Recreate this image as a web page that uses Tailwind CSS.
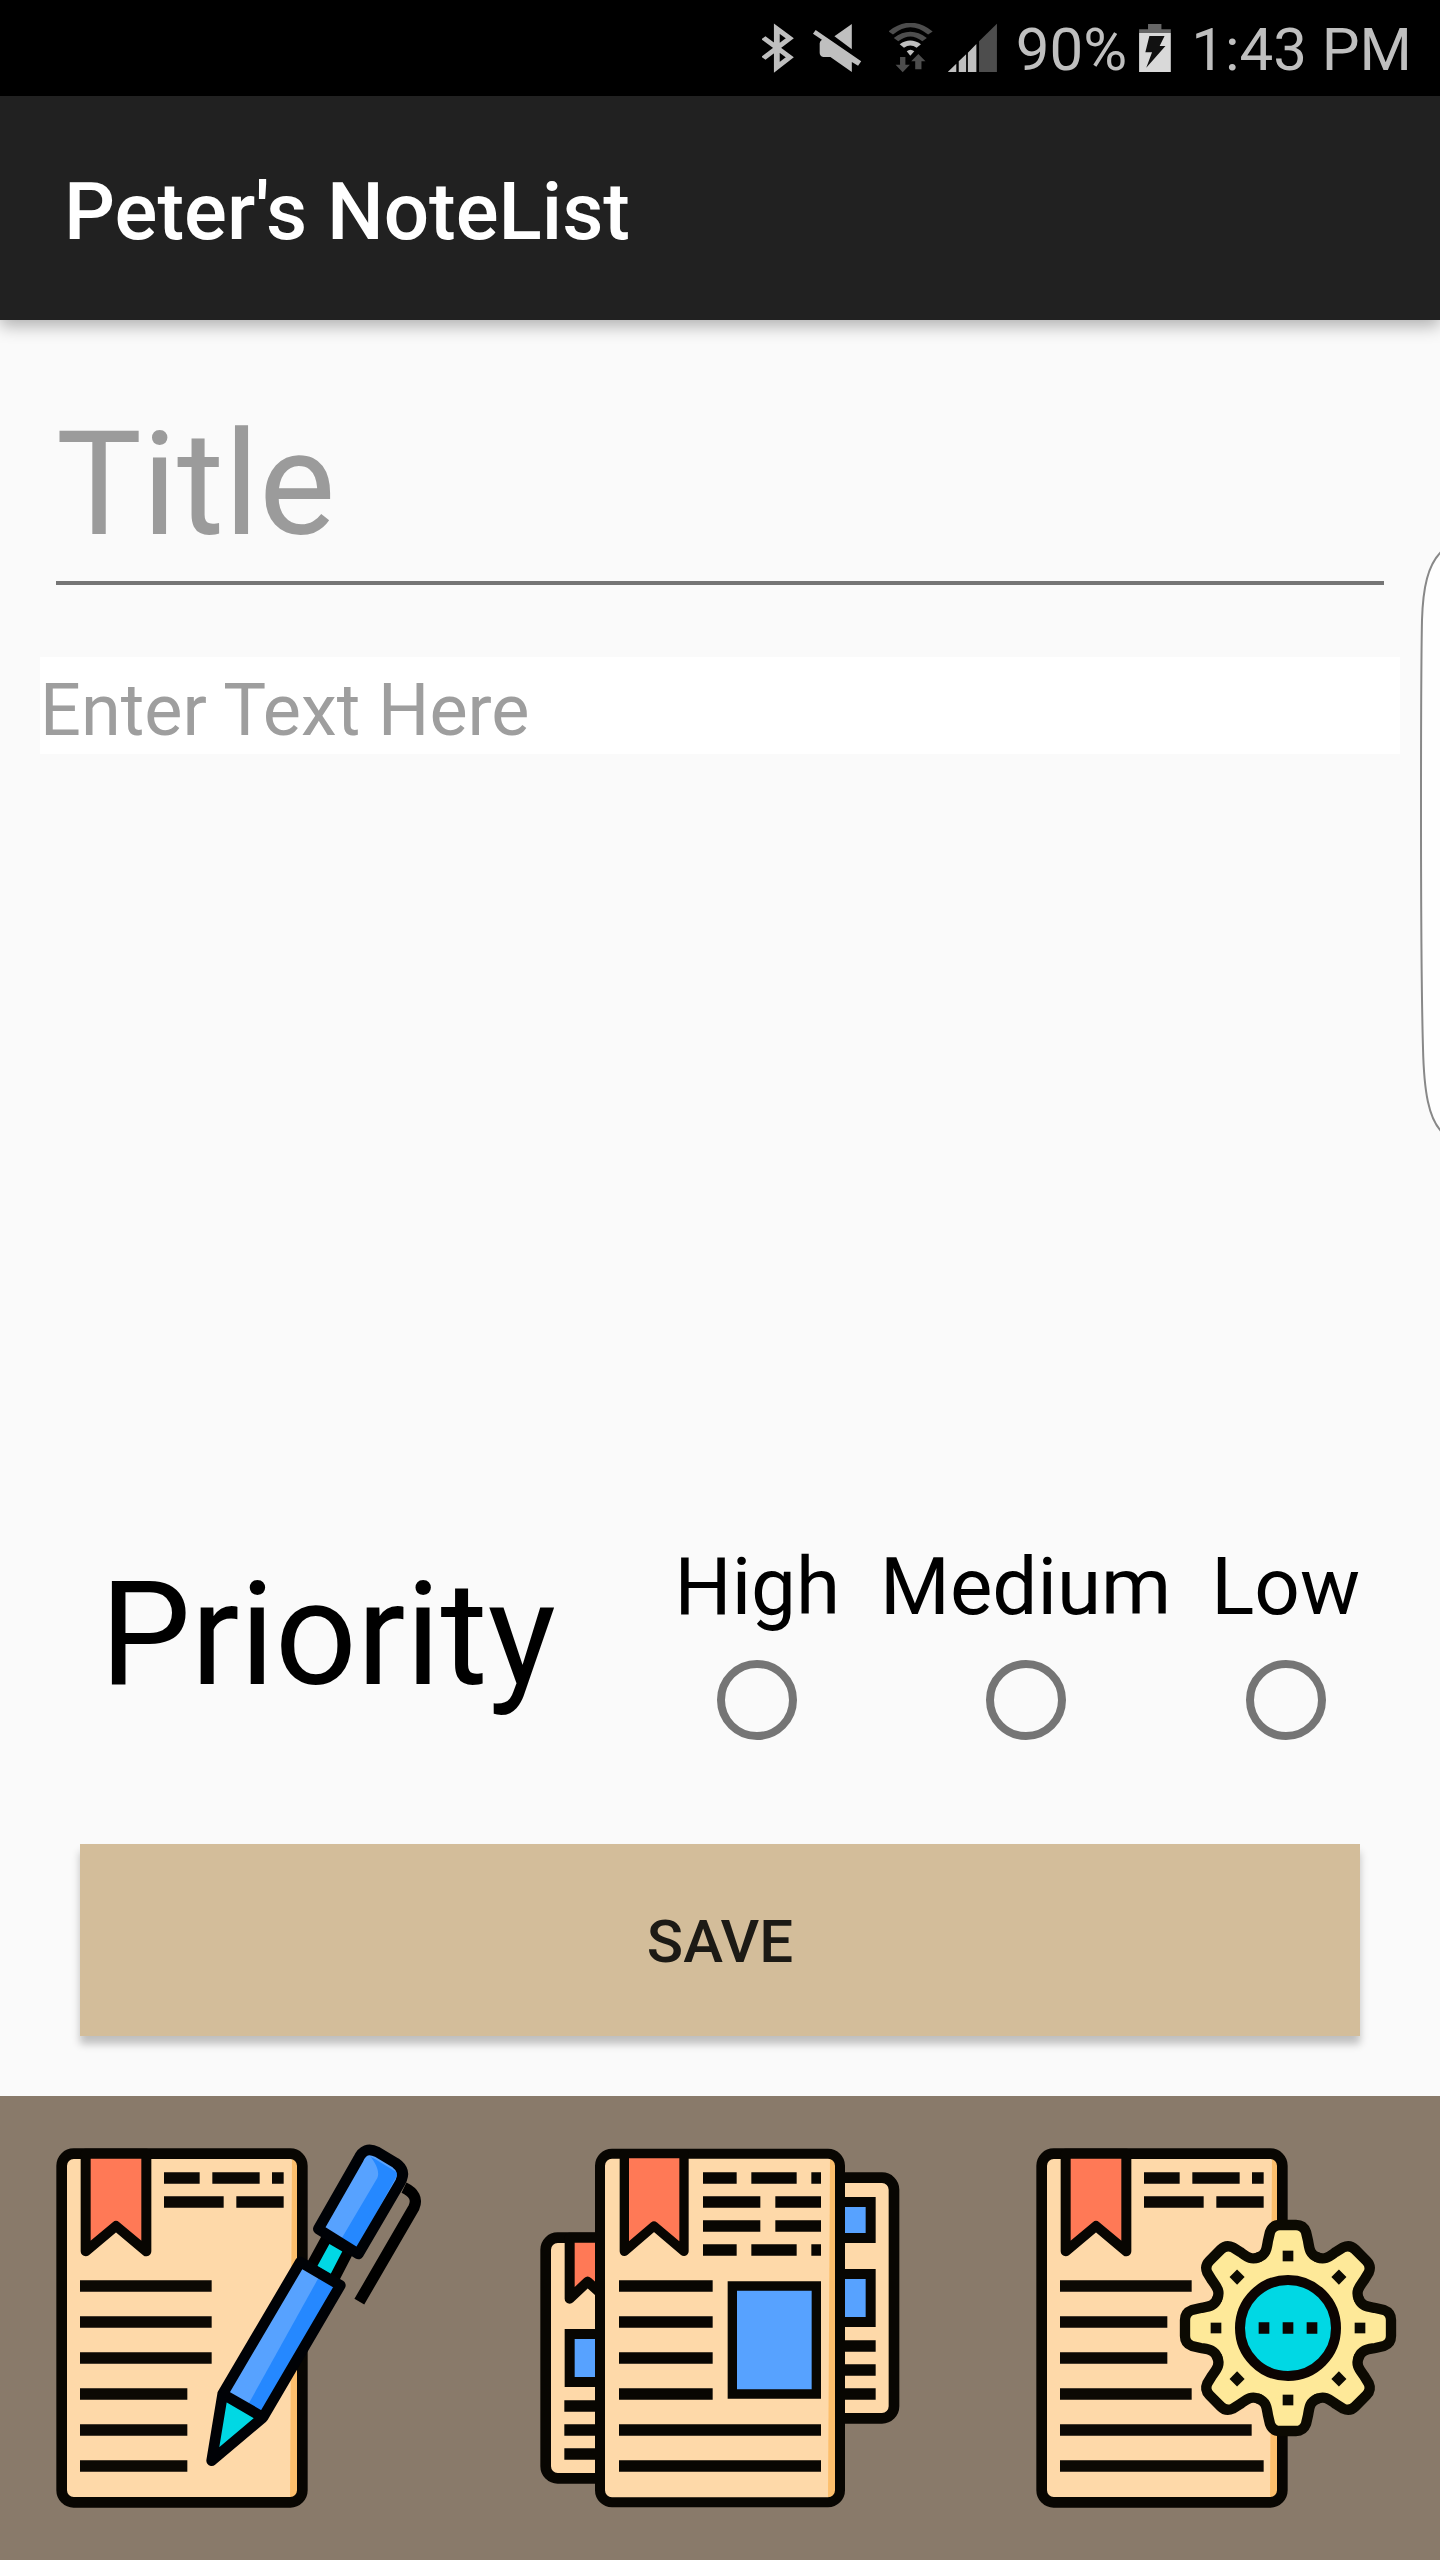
<!DOCTYPE html>
<html lang="en">
<head>
<meta charset="utf-8">
<meta name="viewport" content="width=device-width, initial-scale=1">
<title>Peter's NoteList</title>
<script src="https://cdn.jsdelivr.net/npm/@tailwindcss/browser@4"></script>
</head>
<body class="relative flex min-h-screen flex-col overflow-x-hidden bg-[#fafafa] font-[Roboto,sans-serif] text-black">

<!-- Status bar -->
<div class="flex h-24 items-center justify-end bg-black pr-7 text-[60px] leading-[84px] text-[#bfbfbf]">
  <svg class="mr-[18px] h-[50px] w-8" viewBox="44.8 69 71.68 150" preserveAspectRatio="none" fill="none" stroke="#bfbfbf" stroke-width="13" aria-label="Bluetooth">
    <path d="M48 113L107 172L78 202V86L107 115L48 175"/>
  </svg>
  <svg class="mr-[27px] h-[50px] w-[50px]" viewBox="156.8 69 112 150" preserveAspectRatio="none" fill="#bfbfbf" aria-label="Muted">
    <path d="M246 72V148L207 109Z"/>
    <path d="M165 90L267 184L260 197L246 186V216L198 171H182Q174 168 174 158V130Q174 124 179 119L159 101Z"/>
  </svg>
  <svg class="mr-[15px] h-[50px] w-11" viewBox="329.28 69 98.56 150" preserveAspectRatio="none" fill="none" aria-label="Wi-Fi">
    <path d="M333 99Q377 51 422 99" stroke="#4d4d4d" stroke-width="14"/>
    <path d="M345 119Q377 86 409 119" stroke="#4d4d4d" stroke-width="14"/>
    <path d="M358 138Q377 120 396 138" stroke="#bfbfbf" stroke-width="14"/>
    <path d="M369 154Q377 145 386 154L377 167Z" fill="#bfbfbf"/>
    <path d="M354 171H366V194H376L360 217L344 194H354ZM388 208V184H379L395 162L411 184H402V208Z" fill="#4d4d4d"/>
  </svg>
  <svg class="mr-[18px] h-[50px] w-[50px]" viewBox="461.44 69 112 150" preserveAspectRatio="none" fill="#bfbfbf" aria-label="Signal">
    <path d="M461 216L480 191V216ZM485.500 184L502 163V216H485.500ZM506 158L525 132V216H506Z"/>
    <path d="M531 124L571 71V216H531Z" fill="#4d4d4d"/>
  </svg>
  <span class="pt-1">90%</span>
  <svg class="mr-5 ml-3 h-[50px] w-8" viewBox="893.76 69 71.68 150" preserveAspectRatio="none" aria-label="Charging">
    <path d="M894 99V88H914V72H944V88H965V99Z" fill="#666"/>
    <path d="M894 99H965V216H894Z" fill="#d9d9d9"/>
    <path d="M917 108H951L940 138H953L910 203L923 157H908Z" fill="#111"/>
  </svg>
  <span class="pt-1">1:43 PM</span>
</div>

<!-- App bar -->
<header class="flex h-56 items-center bg-[#212121] px-16 pt-2 shadow-[0_6px_16px_rgba(0,0,0,0.3)]">
  <h1 class="text-[80px] leading-[94px] font-medium text-white">Peter's NoteList</h1>
</header>

<main class="flex flex-1 flex-col pt-[67px] pb-[60px]">
  <input type="text" aria-label="Title" placeholder="Title" class="mx-14 h-[198px] border-b-4 border-[#757575] bg-transparent pt-[2px] text-[144px] outline-none placeholder:text-[#9b9b9b]">
  <textarea rows="1" aria-label="Note text" placeholder="Enter Text Here" class="mx-10 mt-[72px] h-[97px] resize-none overflow-hidden bg-white pt-3 text-[72px] leading-[84px] outline-none placeholder:text-[#9e9e9e]"></textarea>

  <div class="mt-auto flex items-start justify-between pt-20 pr-[60px] pl-[100px]">
    <h2 id="priority" class="text-[144px] leading-[190px]">Priority</h2>
    <div role="radiogroup" aria-labelledby="priority" class="flex text-[80px] leading-[94px]">
      <label class="flex flex-col items-center gap-[26px] px-5">High
        <input type="radio" name="priority" value="high" class="size-20 appearance-none rounded-full border-8 border-[#757575] checked:bg-[#757575]">
      </label>
      <label class="flex flex-col items-center gap-[26px] px-5">Medium
        <input type="radio" name="priority" value="medium" class="size-20 appearance-none rounded-full border-8 border-[#757575] checked:bg-[#757575]">
      </label>
      <label class="flex flex-col items-center gap-[26px] px-5">Low
        <input type="radio" name="priority" value="low" class="size-20 appearance-none rounded-full border-8 border-[#757575] checked:bg-[#757575]">
      </label>
    </div>
  </div>

  <button type="button" class="mx-20 mt-[104px] h-48 bg-[#d3bd9a] pt-1 text-[60px] font-medium text-[#1c1a15] shadow-[0_8px_8px_rgba(0,0,0,0.24)]">SAVE</button>
</main>

<!-- Bottom navigation -->
<nav class="grid grid-cols-3 justify-items-center bg-[#897a6a] pt-[14px] pb-5">
  <a href="#new" aria-label="Write note">
    <svg class="h-[430px] w-[420px]" viewBox="0 0 1260 1290" fill="none">
      <defs>
        <g id="page">
          <rect x="95" y="131" width="722" height="1046" rx="36" fill="#fed9a9"/>
          <path d="M786 140H802V1168H780Z" fill="#fdbf6c"/>
          <rect x="95" y="131" width="722" height="1046" rx="36" stroke="#080602" stroke-width="32"/>
          <path d="M167 131V424L258 348L349 424V131Z" fill="#ff7956" stroke="#080602" stroke-width="30" stroke-linejoin="round"/>
          <path d="M402 204H509M547 204H689M726 204H761M402 276H581M619 276H761" stroke="#0c0904" stroke-width="34"/>
        </g>
      </defs>
      <use href="#page"/>
      <path d="M150 528H545M150 636H545M150 744H545M150 852H472M150 960H472M150 1068H472" stroke="#0c0904" stroke-width="34"/>
      <path d="M1122 233Q1168 255 1152 292L988 575" stroke="#000" stroke-width="34"/>
      <path d="M892 380L958 418L908 515L840 475Z" fill="#00d8e4" stroke="#000" stroke-width="32"/>
      <path d="M865 357L985 147Q1003 106 1042 126L1097 159Q1130 182 1111 217L985 432Z" fill="#57a2ff"/>
      <path d="M1040 150L1105 190L980 415L932 390L1042 204Q1052 180 1022 140Z" fill="#2588ff"/>
      <path d="M865 357L985 147Q1003 106 1042 126L1097 159Q1130 182 1111 217L985 432Z" stroke="#000206" stroke-width="32" stroke-linejoin="round"/>
      <path d="M811 456L931 526L699 922L578 852Z" fill="#57a2ff"/>
      <path d="M872 492L931 526L699 922L650 892Z" fill="#2588ff"/>
      <path d="M578 852L699 922L545 1052Z" fill="#00d8e4"/>
      <path d="M811 456L931 526L699 922L578 852ZM578 852L545 1052L699 922" stroke="#000206" stroke-width="32" stroke-linejoin="round"/>
    </svg>
  </a>
  <a href="#notes" aria-label="All notes">
    <svg class="h-[430px] w-[420px]" viewBox="0 0 1260 1290" fill="none" stroke="#080602">
      <rect x="700" y="203" width="452" height="722" rx="36" fill="#fed9a9" stroke-width="32"/>
      <path d="M900 276H1082V384H900ZM900 492H1082V636H900Z" fill="#57a2ff" stroke-width="30"/>
      <path d="M900 708H1097M900 780H1097M900 852H1097" stroke-width="34"/>
      <rect x="107" y="383" width="452" height="722" rx="36" fill="#fed9a9" stroke-width="32"/>
      <path d="M179 383V566L233 515L290 566V383Z" fill="#ff7956" stroke-width="30" stroke-linejoin="round"/>
      <path d="M179 672H340V816H179Z" fill="#57a2ff" stroke-width="30"/>
      <path d="M163 888H340M163 960H340M163 1032H340" stroke-width="34"/>
      <rect x="270" y="131" width="720" height="1046" rx="36" fill="#fed9a9" stroke="none"/>
      <path d="M960 140H976V1168H954Z" fill="#fdbf6c" stroke="none"/>
      <rect x="270" y="131" width="720" height="1046" rx="36" stroke-width="30"/>
      <path d="M343 131V424L432 348L522 424V131Z" fill="#ff7956" stroke-width="28" stroke-linejoin="round"/>
      <path d="M579 204H680M724 204H860M904 204H933M579 276H751M796 276H933M579 348H751M796 348H933M579 420H680M724 420H860M904 420H933" stroke-width="34"/>
      <path d="M327 528H608M327 636H608M327 744H608M327 852H608M327 960H933M327 1068H933" stroke-width="34"/>
      <path d="M667 528H919V852H667Z" fill="#57a2ff" stroke-width="28"/>
    </svg>
  </a>
  <a href="#settings" aria-label="Settings">
    <svg class="h-[430px] w-[420px]" viewBox="-60 0 1260 1290" fill="none">
      <defs>
        <g id="tooth">
          <path d="M-88 -212C-64 -222 -64 -240 -60 -262L-54 -288Q-46 -309 -24 -309H24Q46 -309 54 -288L60 -262C64 -240 64 -222 88 -212" fill="#fee999" stroke="#0c0a02" stroke-width="31" stroke-linejoin="round" stroke-linecap="round"/>
        </g>
        <path id="hole" d="M-16 -232H16V-200H-16Z" fill="#0c0a02"/>
      </defs>
      <use href="#page"/>
      <path d="M150 528H545M150 636H472M150 744H472M150 852H545M150 960H725M150 1068H761" stroke="#0c0904" stroke-width="34"/>
      <g transform="translate(834 654)">
        <circle r="226" fill="#fee999"/>
        <use href="#tooth"/>
        <use href="#tooth" transform="rotate(45)"/>
        <use href="#tooth" transform="rotate(90)"/>
        <use href="#tooth" transform="rotate(135)"/>
        <use href="#tooth" transform="rotate(180)"/>
        <use href="#tooth" transform="rotate(225)"/>
        <use href="#tooth" transform="rotate(270)"/>
        <use href="#tooth" transform="rotate(315)"/>
        <circle r="213" fill="#fee999"/>
        <use href="#hole"/>
        <use href="#hole" transform="rotate(45)"/>
        <use href="#hole" transform="rotate(90)"/>
        <use href="#hole" transform="rotate(135)"/>
        <use href="#hole" transform="rotate(180)"/>
        <use href="#hole" transform="rotate(225)"/>
        <use href="#hole" transform="rotate(270)"/>
        <use href="#hole" transform="rotate(315)"/>
        <circle r="144" fill="#00d8e4" stroke="#0c0402" stroke-width="30"/>
        <path d="M-88 0H-56M-16 0H16M56 0H88" stroke="#0c0402" stroke-width="34"/>
      </g>
    </svg>
  </a>
</nav>

<!-- Edge panel handle overlapping the right side -->
<svg class="absolute top-[548px] right-0 h-[588px] w-5" viewBox="0 0 20 588" fill="#fefefe" stroke="#888" stroke-width="2" aria-hidden="true">
  <path d="M21 4C8 17 3 39 2 72C1 120 1 180 1 260C1 350 1 430 3 500C4 545 9 570 21 583"/>
</svg>
</body>
</html>
